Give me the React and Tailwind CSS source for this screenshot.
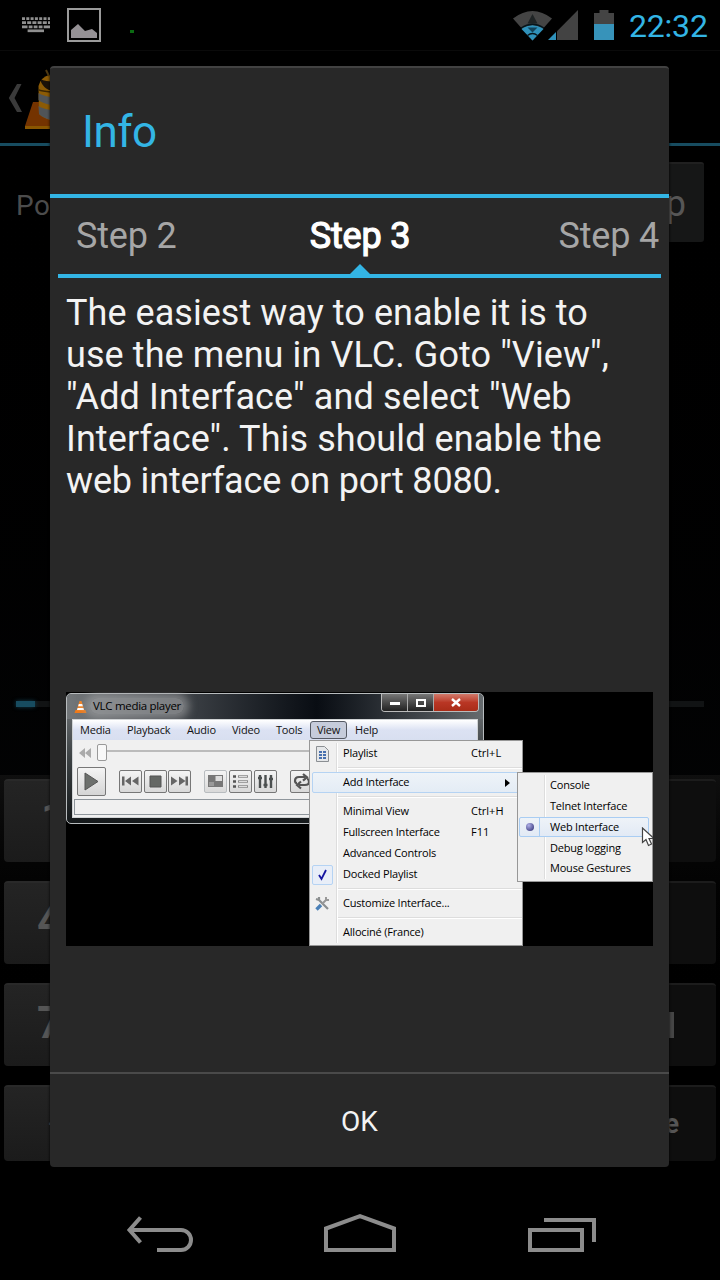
const PAD_ROWS = [
  { h: 'h-[83px]', left: '1', right: '' },
  { h: 'h-[83px]', left: '4', right: '' },
  { h: 'h-[83px]', left: '7', right: 'l' },
  { h: 'h-[76px]', left: '-', right: 'e' },
];

function StatusBar() {
  return (
    <header className="flex h-[51px] shrink-0 items-center border-b border-[#0a0a0a] pl-[22px] pr-[12px]">
      <svg width="28" height="16" viewBox="0 0 28 16" className="shrink-0">
        <g stroke="#8f8f8f" strokeWidth="2.7">
          <path d="M0 1.6h28" strokeDasharray="3 1.3" />
          <path d="M0 5.6h28" strokeDasharray="4 1.2" />
          <path d="M0 9.8h28" strokeDasharray="5.5 1.2 3.8 1.2 3.8 1.2 3.8 1.2 6.5 1" />
          <path d="M5.6 13.8h16.4" />
        </g>
      </svg>
      <svg width="34" height="34" viewBox="0 0 34 34" className="ml-[17px] shrink-0">
        <rect x="1" y="1" width="32" height="32" fill="none" stroke="#9b9b9b" strokeWidth="2" />
        <path d="M4 30V22l7-6 7 7 7-2 5 4v5z" fill="#959195" />
      </svg>
      <span className="ml-[29px] mt-[13px] h-[3px] w-[4px] bg-[#0b6a12]" />
      <svg width="66" height="32" viewBox="0 0 66 32" className="ml-auto shrink-0">
        <path d="M0 9.500Q19.500-5.500 39 9.500L19.500 31.500z" fill="#444" />
        <path d="M8.500 20Q19.500 12.500 30.500 20L19.500 31.500z" fill="#2f91ba" />
        <path d="M19.500 5l5 9.500h-10z" fill="#1f2425" />
        <path d="M8 19Q19.500 11.500 31 19M14.500 26.500Q19.500 22.500 24.500 26.500" fill="none" stroke="#07151b" strokeWidth="1.300" />
        <path d="M14.500 18.500h10l-5 5z" fill="#124258" />
        <path d="M65 1v30H44V22.300z" fill="#434343" />
        <path d="M43 23v8H35z" fill="#2f91ba" />
      </svg>
      <svg width="20" height="32" viewBox="0 0 20 32" className="ml-[15px] shrink-0">
        <path d="M0 4h5.500V1h9v3H20v11H0z" fill="#444" />
        <path d="M0 15h20v16H0z" fill="#3793ba" />
      </svg>
      <span className="ml-[15px] mt-[1px] w-[79px] whitespace-nowrap text-[32px] leading-[36px] tracking-[-0.2px] text-[#33b5e5]">22:32</span>
    </header>
  );
}

function RemoteScreen() {
  return (
    <main className="flex flex-1 flex-col bg-linear-to-b from-black to-[#080a0d]">
      <div className="flex h-[95px] shrink-0 items-center border-b-[3px] border-[#174c60] pl-[8px]">
        <svg width="14" height="28" viewBox="0 0 14 28" className="mt-[2px]">
          <path d="M13.500 0L9 0 .8 14 9 28h5L6.500 14z" fill="#3a3a3a" />
        </svg>
        <svg width="50" height="62" viewBox="0 0 50 62" className="ml-[3px] mt-[4px]">
          <path d="M8 34L0 58h50V34z" fill="#743300" />
          <path d="M0 58h50v3H0z" fill="#8a5600" />
          <path d="M13.500 18Q16 9 24 7h26v45H26Q18 50 14 46z" fill="#8c5b05" />
          <path d="M13.500 21Q20 24 50 24v1.500Q20 25.500 13.500 22.500z" fill="#3a2604" />
          <path d="M13.500 25Q20 30 50 32v8Q20 38 13.500 32zM13.500 38Q20 43 50 44v8H26Q18 50 14 46z" fill="#505457" />
          <path d="M16 11Q20 15 50 13v9H24Q18 19 16 14z" fill="#1b1208" />
          <path d="M21 2l3 6" stroke="#513b12" strokeWidth="2" />
        </svg>
      </div>
      <div className="mt-[16px] flex h-[80px] shrink-0 items-center justify-between px-[16px]">
        <span className="mt-[7px] text-[28px] tracking-[0.6px] text-[#4c4c4c]">Po</span>
        <span className="flex h-[80px] w-[140px] items-center justify-end rounded-[3px] border-t-2 border-[#202020] bg-[#161717] pr-[18px] pt-[2px] text-[36px] text-[#565656]">p</span>
      </div>
      <div className="mx-[16px] mt-[459px] h-[6px] shrink-0 bg-[#111314]">
        <div className="h-[6px] w-[19px] bg-[#174c60] shadow-[0_0_4px_#123c4c]" />
      </div>
      <div className="mt-[68px] flex flex-1 flex-col gap-[19px] bg-linear-to-b from-[#0f0f0f] to-black to-60% px-[4px] pt-[4px]">
        {PAD_ROWS.map((row) => (
          <div key={row.left} className={`grid shrink-0 grid-cols-3 gap-[8px] ${row.h}`}>
            <div className="flex items-center rounded-[4px] border-t-2 border-[#292929] bg-linear-to-b from-[#242424] to-[#1b1b1b] pl-[33px] text-[44px] font-bold text-[#555]">
              {row.left === '-' ? <span className="ml-[11px] text-[22px] leading-[24px]">-</span> : <span className={row.left === '1' ? 'ml-[4px] mt-[-6px]' : 'mt-[-5px]'}>{row.left}</span>}
            </div>
            <div className="rounded-[4px] bg-[#181818]" />
            <div className="flex items-center justify-end rounded-[4px] border-t-2 border-[#1c1c1c] bg-[#0e0e0e] pr-[37px] text-[27px] font-bold text-[#555]">
              {row.right === 'l' ? <span className="mb-[1px] mr-[5px] h-[26px] w-[8px] bg-[#454545]" /> : row.right}
            </div>
          </div>
        ))}
      </div>
    </main>
  );
}

function NavBar() {
  return (
    <nav className="flex h-[96px] shrink-0 bg-black pl-[126px] pt-[30px]">
      <svg width="68" height="44" viewBox="0 0 68 44" fill="none" stroke="#8c8c8c" strokeWidth="4">
        <path d="M14.500 3.500L3.500 16l11 12.500M4 16h51a10 10 0 0 1 0 20H31" />
      </svg>
      <svg width="72" height="44" viewBox="0 0 72 44" fill="none" stroke="#8c8c8c" strokeWidth="4" className="ml-[130px]">
        <path d="M2 36V14.500L36 2.200l34 12.300V36z" />
      </svg>
      <svg width="70" height="44" viewBox="0 0 70 44" fill="none" stroke="#8c8c8c" strokeWidth="4" className="ml-[132px]">
        <path d="M2 16h52v20H2zM16 6h50v22" />
      </svg>
    </nav>
  );
}

function ConeIcon() {
  return (
    <svg width="13" height="14" viewBox="0 0 13 14">
      <path d="M1.500 10h10l1 3H.5z" fill="#ee7a1a" />
      <path d="M5.500 1h2l3 10h-8z" fill="#f58220" />
      <path d="M4.800 4h3.400l.7 2.200H4.100zM3.600 8h5.800l.6 2H3z" fill="#fff" />
    </svg>
  );
}

const GLYPHS = {
  prev: <path d="M3 6.500h2.500v9H3zM12 6.500v9L6 11zM19.500 6.500v9L13 11z" fill="#666" />,
  stop: <path d="M6 6h11v11H6z" fill="#656865" stroke="#555" />,
  next: <path d="M17.500 6.500H20v9h-2.500zM3 6.500v9L9.500 11zM11 6.500v9L17.500 11z" fill="#666" />,
  full: (
    <g>
      <path d="M4 5h15v12H4z" fill="#777" />
      <path d="M11.500 6h6.500v5h-6.500z" fill="#ddd" />
      <path d="M5 12h5v4H5z" fill="#999" />
    </g>
  ),
  list: (
    <g>
      <path d="M4 6.500h3M4 11.500h3M4 16.500h3" stroke="#555" strokeWidth="2.400" />
      <path d="M9 6.500h10M9 11.500h10M9 16.500h10" stroke="#8b8b8b" strokeWidth="2.600" />
      <path d="M10 6.500h8M10 11.500h8M10 16.500h8" stroke="#ddd" strokeWidth="1" />
    </g>
  ),
  eq: <path d="M6 5v13M11.500 5v13M17 5v13M4 8h4M9.500 15h4M15 9h4" stroke="#4c5050" strokeWidth="2.400" />,
  loop: <path d="M15 7H9q-4 0-4 4 0 2 2 2M13 4l4 3.300-4 3.400M9 15h6q4 0 4-3 0-3-2-3M11 11.500L7 15l4 3.500" fill="none" stroke="#555" strokeWidth="2.200" />,
};

function ToolButton({ name, gap, faint }) {
  return (
    <span className={`flex h-[23px] w-[23px] shrink-0 items-center justify-center rounded-[2px] border bg-linear-to-b from-[#f4f4f4] to-[#d9d9d9] ${faint ? 'border-[#b8bcbf]' : 'border-[#777]'} ${gap}`}>
      <svg width="21" height="21" viewBox="1 1 21 21">{GLYPHS[name]}</svg>
    </span>
  );
}

function PlayerWindow() {
  return (
    <div className="absolute left-0 top-[1px] flex h-[131px] w-[418px] flex-col rounded-[5px] border border-[#b8bcbe] bg-linear-to-b from-[#777b7e] via-[#3c4143] to-[#15191b] px-[5px] pb-[5px]">
      <div className="-mx-[5px] flex h-[25px] shrink-0 items-center rounded-t-[4px] bg-linear-to-r from-[#73777a] via-[#090d13] via-60% to-[#666b6e] pl-[7px]">
        <ConeIcon />
        <span className="mb-[2px] ml-[3px] rounded-full bg-[#a5a7a8]/60 px-[3px] text-[11.5px] leading-[16px] tracking-[-0.3px] text-black shadow-[0_0_9px_5px_rgba(165,167,168,0.6)]">VLC media player</span>
        <div className="mb-auto ml-auto mr-[4px] flex h-[18px] overflow-hidden rounded-b-[4px] border border-t-0 border-[#bbb]">
          <span className="flex w-[26px] items-center justify-center border-r border-[#aaa] bg-linear-to-b from-[#777] to-[#222]"><i className="mt-[2px] h-[3px] w-[10px] bg-white" /></span>
          <span className="flex w-[26px] items-center justify-center border-r border-[#aaa] bg-linear-to-b from-[#777] to-[#222]"><i className="h-[8px] w-[10px] border-2 border-white" /></span>
          <span className="flex w-[44px] items-center justify-center bg-linear-to-b from-[#d2796a] via-[#b93624] to-[#a92c18]">
            <svg width="10" height="9" viewBox="0 0 10 9"><path d="M1 1l8 7M9 1L1 8" stroke="#fff" strokeWidth="2.400" /></svg>
          </span>
        </div>
      </div>
      <div className="flex flex-1 flex-col border border-[#d0d3d5] bg-[#f0f0f0]">
        <div className="flex h-[20px] shrink-0 items-center bg-linear-to-b from-white via-[#dce2f3] to-[#d8dff0] pl-[7px] text-[11px] text-[#111]">
          <span className="w-[47px]">Media</span>
          <span className="w-[60px]">Playback</span>
          <span className="w-[45px]">Audio</span>
          <span className="w-[44px]">Video</span>
          <span className="w-[34px]">Tools</span>
          <span className="flex h-[18px] w-[37px] items-center justify-center rounded-[3px] border border-[#555a64] bg-[#c6ccdb]">View</span>
          <span className="ml-[8px]">Help</span>
        </div>
        <div className="flex h-[26px] shrink-0 items-center pl-[6px]">
          <svg width="12" height="10" viewBox="0 0 12 10"><path d="M6 0v10L0 5zM12 0v10L6 5z" fill="#aaa" /></svg>
          <span className="ml-[6px] mb-[2px] h-[17px] w-[10px] rounded-[2px] border border-[#999] bg-[#f8f8f8]" />
          <span className="mb-[4px] h-[2px] flex-1 bg-[#bbb]" />
        </div>
        <div className="flex h-[30px] shrink-0 items-center pl-[4px]">
          <span className="flex h-[29px] w-[29px] shrink-0 items-center justify-center rounded-[2px] border border-[#777] bg-linear-to-b from-[#f4f4f4] to-[#d5d5d5]">
            <svg width="15" height="19" viewBox="0 0 15 19"><path d="M1 1l13 8.500L1 18z" fill="#6d706d" stroke="#555" /></svg>
          </span>
          <ToolButton name="prev" gap="ml-[13px]" />
          <ToolButton name="stop" gap="ml-[2px]" />
          <ToolButton name="next" gap="ml-[1px]" />
          <ToolButton name="full" gap="ml-[13px]" faint />
          <ToolButton name="list" gap="ml-[2px]" />
          <ToolButton name="eq" gap="ml-[2px]" />
          <ToolButton name="loop" gap="ml-[13px]" />
        </div>
        <div className="mx-[1px] mt-[3px] h-[16px] shrink-0 border border-[#8f969c] bg-[#f0f0f0]" />
      </div>
    </div>
  );
}

function MenuRow({ label, keys, icon, active, arrow }) {
  return (
    <div className={`mx-[2px] flex h-[21px] shrink-0 items-center rounded-[2px] border ${active ? 'border-[#b5d3f3] bg-linear-to-b from-[#eef3f8] to-[#e4ecf5] pr-[9px]' : 'border-transparent pr-[5px]'}`}>
      <span className="flex w-[30px] items-center pl-[3px]">{icon}</span>
      <span className="whitespace-nowrap">{label}</span>
      {keys && <span className="ml-auto w-[43px] tracking-normal">{keys}</span>}
      {arrow && <svg width="5" height="8" viewBox="0 0 5 8" className="ml-auto"><path d="M0 0l5 4-5 4z" fill="#000" /></svg>}
    </div>
  );
}

function Separator() {
  return <div className="ml-[28px] flex h-[8px] shrink-0 items-center"><i className="h-[2px] w-full border-b border-white bg-[#ddd]" /></div>;
}

function ViewMenu() {
  const sheet = (
    <svg width="13" height="16" viewBox="0 0 13 16">
      <path d="M.5.500h8l4 4v11H.5z" fill="#e5e7e9" stroke="#8b8f93" />
      <path d="M3 6h3M3 9h3M3 12h3M7 6h3M7 9h3M7 12h3" stroke="#466fae" strokeWidth="1.800" />
    </svg>
  );
  const check = (
    <span className="-ml-[4px] flex h-[20px] w-[21px] items-center justify-center rounded-[2px] border border-[#b5d3f3] bg-[#e8eef8]">
      <svg width="9" height="12" viewBox="0 0 9 12"><path d="M1 6l2.500 4L8 1" fill="none" stroke="#1414a0" strokeWidth="1.800" /></svg>
    </span>
  );
  const tools = (
    <svg width="15" height="15" viewBox="0 0 15 15" className="-ml-[1px]">
      <path d="M3 3l10 10M1 3l3 1V1" fill="none" stroke="#8b8f90" strokeWidth="2.200" />
      <path d="M7 8l5-5M11 1v3h3" fill="none" stroke="#999" strokeWidth="2" />
      <path d="M1.500 13.500L6 9" stroke="#4a80b8" strokeWidth="3.400" />
    </svg>
  );
  return (
    <div className="absolute left-[243px] top-[48px] h-[206px] w-[214px] border border-[#979797] bg-[#f0f0f0] pt-[2px]">
      <i className="absolute left-[26px] top-[2px] h-[200px] w-[2px] border-r border-white bg-[#ddd]" />
      <div className="relative flex flex-col">
        <MenuRow label="Playlist" keys="Ctrl+L" icon={sheet} />
        <Separator />
        <MenuRow label="Add Interface" active arrow />
        <Separator />
        <MenuRow label="Minimal View" keys="Ctrl+H" />
        <MenuRow label="Fullscreen Interface" keys="F11" />
        <MenuRow label="Advanced Controls" />
        <MenuRow label="Docked Playlist" icon={check} />
        <Separator />
        <MenuRow label="Customize Interface..." icon={tools} />
        <Separator />
        <MenuRow label="Allociné (France)" />
      </div>
    </div>
  );
}

function InterfaceMenu() {
  return (
    <div className="absolute left-[451px] top-[80px] flex h-[110px] w-[136px] flex-col border border-[#979797] bg-[#f0f0f0] pt-[2px]">
      <i className="absolute left-[26px] top-[2px] h-[104px] w-[2px] border-r border-white bg-[#ddd]" />
      {['Console', 'Telnet Interface', 'Web Interface', 'Debug logging', 'Mouse Gestures'].map((label) => {
        const active = label === 'Web Interface';
        return (
          <div key={label} className={`relative ml-[1px] mr-[3px] flex h-[20.8px] items-center rounded-[2px] border ${active ? 'border-[#a9cdf3] bg-linear-to-b from-[#eef3f8] to-[#e2eaf5]' : 'border-transparent'}`}>
            <span className={`mr-[10px] flex h-full w-[20px] items-center justify-center ${active ? 'border-r border-[#a9cdf3]' : ''}`}>
              {active && <i className="h-[8px] w-[8px] rounded-full bg-radial-[at_35%_30%] from-[#b0b0e8] to-[#28286e]" />}
            </span>
            <span className="whitespace-nowrap">{label}</span>
          </div>
        );
      })}
    </div>
  );
}

function Illustration() {
  return (
    <div className="relative h-[254px] w-[587px] shrink-0 overflow-hidden bg-black font-['Open_Sans','Noto_Sans',sans-serif] text-[11px] tracking-[-0.2px] text-black">
      <PlayerWindow />
      <ViewMenu />
      <InterfaceMenu />
      <svg width="13" height="20" viewBox="0 0 13 20" className="absolute left-[575px] top-[135px]">
        <path d="M1.500 1v14.500l3.500-3 2.500 6 3-1.500-2.500-5.500h5z" fill="#fff" stroke="#444" strokeWidth="1.200" />
      </svg>
    </div>
  );
}

function InfoDialog() {
  return (
    <section className="absolute left-[50px] top-[66px] flex h-[1101px] w-[619px] flex-col overflow-hidden rounded-[4px] border-t-2 border-[#424242] bg-[#282828] shadow-[0_0_3px_#000]">
      <h1 className="h-[126px] shrink-0 pl-[32px] pt-[38px] text-[44px] leading-[52px] tracking-[-0.5px] text-[#33b5e5]">Info</h1>
      <div className="h-[4px] shrink-0 bg-[#33b5e5]" />
      <div className="mx-[8px] flex h-[80px] shrink-0 justify-between border-b-4 border-[#33b5e5] pl-[18px] pr-[2px] pt-[17px] text-[36px] leading-[42px] tracking-[-0.2px] text-[#a6a6a6]">
        <span className="w-[101px] whitespace-nowrap">Step 2</span>
        <span className="relative mr-[15px] w-[101px] whitespace-nowrap text-white [-webkit-text-stroke:1.2px_white]">
          Step 3
          <svg width="20" height="10" viewBox="0 0 20 10" className="absolute left-[40px] top-[49px]">
            <path d="M10 0l10 10H0z" fill="#33b5e5" />
          </svg>
        </span>
        <span className="whitespace-nowrap">Step 4</span>
      </div>
      <div className="flex flex-1 flex-col justify-between px-[16px] pb-[126px] pt-[14px]">
        <p className="text-[36px] leading-[42px] text-[#f3f3f3]">
          <span className="tracking-[0.05px]">The easiest way to enable it is to</span><br />
          <span className="tracking-[0.09px]">use the menu in VLC. Goto "View",</span><br />
          <span className="tracking-[0.13px]">"Add Interface" and select "Web</span><br />
          <span className="tracking-[0.09px]">Interface". This should enable the</span><br />
          <span className="tracking-[-0.17px]">web interface on port 8080.</span>
        </p>
        <Illustration />
      </div>
      <button className="h-[95px] shrink-0 border-t-2 border-[#4a4a4a] pt-[3px] text-[28px] leading-[32px] text-[#f3f3f3]">OK</button>
    </section>
  );
}

export default function App() {
  return (
    <div className="relative flex h-[1280px] w-[720px] flex-col overflow-hidden bg-black font-['Roboto',sans-serif]">
      <StatusBar />
      <RemoteScreen />
      <NavBar />
      <InfoDialog />
    </div>
  );
}
